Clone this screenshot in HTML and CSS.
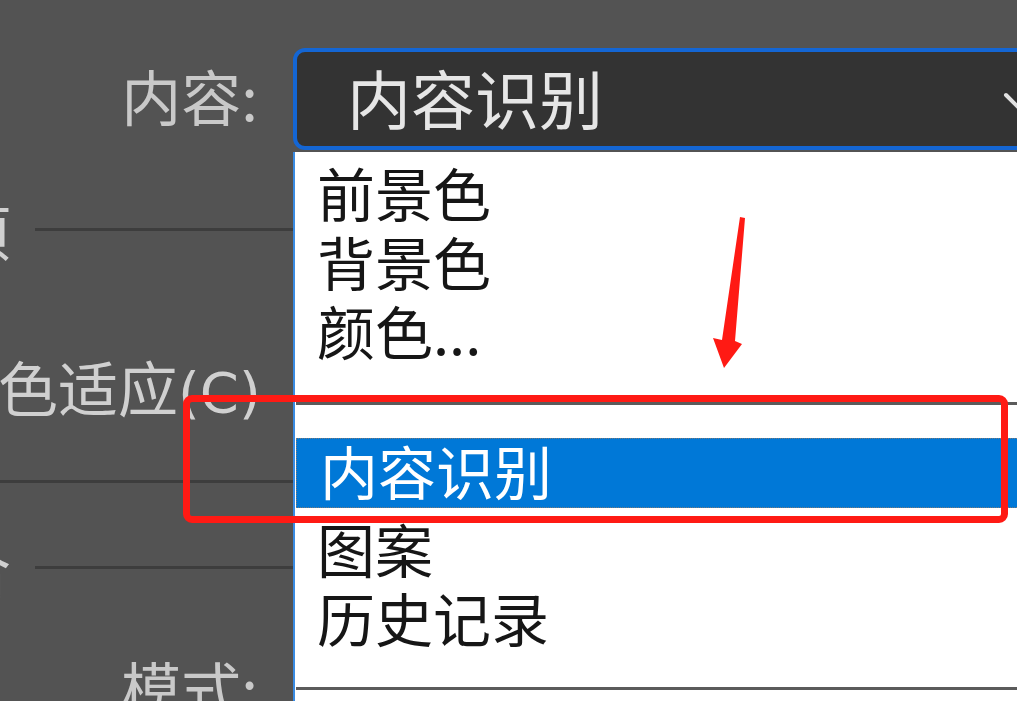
FILE: index.html
```html
<!DOCTYPE html>
<html lang="zh-CN">
<head>
  <meta charset="UTF-8">
  <title>填充</title>
  <meta name="viewport" content="width=device-width, initial-scale=1.0">
  <link rel="stylesheet" href="styles.css">
</head>
<body>

  <div class="dialog">
    <div class="field">
      <label class="field-label">内容:</label>
      <div class="select">
        内容识别
        <svg class="chevron" width="40" height="24" viewBox="0 0 40 24">
          <polyline points="3,3 20,20 37,3" fill="none" stroke="#e2e2e2" stroke-width="4" stroke-linecap="round" stroke-linejoin="round"/>
        </svg>
      </div>
    </div>

    <div class="group options">
      <div class="group-head"><span>选项</span><i class="rule"></i></div>
      <div class="check">颜色适应<span class="key">(C)</span></div>
    </div>

    <div class="divider"></div>

    <div class="group blend">
      <div class="group-head"><span>混合</span><i class="rule"></i></div>
      <div class="field mode">
        <label class="field-label">模式:</label>
      </div>
    </div>

    <ul class="menu">
      <li>前景色</li>
      <li>背景色</li>
      <li>颜色...</li>
      <li class="sep"></li>
      <li class="active">内容识别</li>
      <li>图案</li>
      <li>历史记录</li>
      <li class="sep end"></li>
    </ul>

    <div class="mark"></div>

    <svg class="arrow" width="50" height="170" viewBox="705 210 50 170">
      <polygon points="740,217 745,218 735,341 742,344 724,368 713,338 722,340" fill="#ff1a14"/>
    </svg>
  </div>

</body>
</html>
```

FILE: styles.css
```css
body {
  margin: 0;
  height: 701px;
  overflow: hidden;
  background: #535353;
  font-family: "Noto Sans CJK SC", sans-serif;
}

.dialog {
  position: relative;
  height: 701px;
  padding-top: 48px;
  box-sizing: border-box;
}

.field {
  display: flex;
  align-items: center;
  gap: 35px;
}

.field-label {
  flex-shrink: 0;
  width: 258px;
  padding-bottom: 8px;
  text-align: right;
  font-size: 60px;
  line-height: 1;
  color: #c9c9c9;
}

.select {
  position: relative;
  flex-shrink: 0;
  display: flex;
  align-items: center;
  width: 780px;
  height: 102px;
  box-sizing: border-box;
  padding: 0 0 7px 50px;
  border: 4px solid #1466d4;
  border-radius: 12px;
  background: #333;
  color: #e6e6e6;
  font-size: 64px;
  line-height: 1;
}

.chevron {
  position: absolute;
  left: 706px;
  top: 40px;
}

/* left-hand groups, mostly cut off by the crop */
.group-head {
  display: flex;
  align-items: center;
  gap: 24px;
  height: 60px;
  margin-left: -109px;
  font-size: 60px;
  color: #d0d0d0;
  white-space: nowrap;
}

.group-head .rule {
  flex: 1;
  height: 3px;
  background: #3d3d3d;
}

.options { margin-top: 49px; }

.check {
  margin: 97px 0 6px -62px;
  font-size: 60px;
  line-height: 60px;
  color: #d0d0d0;
  white-space: nowrap;
}

.check .key {
  font-family: "DejaVu Sans", sans-serif;
  font-size: 56px;
}

.divider {
  margin-top: 57px;
  height: 3px;
  background: #3d3d3d;
}

.blend { margin-top: 54px; }

.mode { margin-top: 60px; }

/* open dropdown list */
.menu {
  position: absolute;
  left: 293px;
  top: 152px;
  width: 760px;
  height: 580px;
  margin: 0;
  padding: 9px 0 0;
  list-style: none;
  background: #fff;
  border-left: 2px solid #3a8be2;
  font-size: 58px;
  line-height: 1;
  color: #161616;
}

.menu li {
  display: flex;
  align-items: center;
  height: 69px;
  padding: 0 0 7px 22px;
  box-sizing: border-box;
}

.menu .sep {
  padding: 2px 0 0 1px;
}

.menu .sep::before {
  content: '';
  flex: 1;
  height: 3px;
  background: #5b5b5b;
}

.menu .sep.end { height: 64px; }

.menu .active {
  height: 70px;
  margin: 1px 0 9px 1px;
  padding-left: 23px;
  border: 1px dotted #7a7a7a;
  background: #0078d7;
  color: #fff;
}

/* red annotation */
.mark {
  position: absolute;
  left: 183px;
  top: 395px;
  width: 825px;
  height: 128px;
  box-sizing: border-box;
  border: 7px solid #ff1a14;
  border-radius: 9px;
}

.arrow {
  position: absolute;
  left: 705px;
  top: 210px;
}
```
